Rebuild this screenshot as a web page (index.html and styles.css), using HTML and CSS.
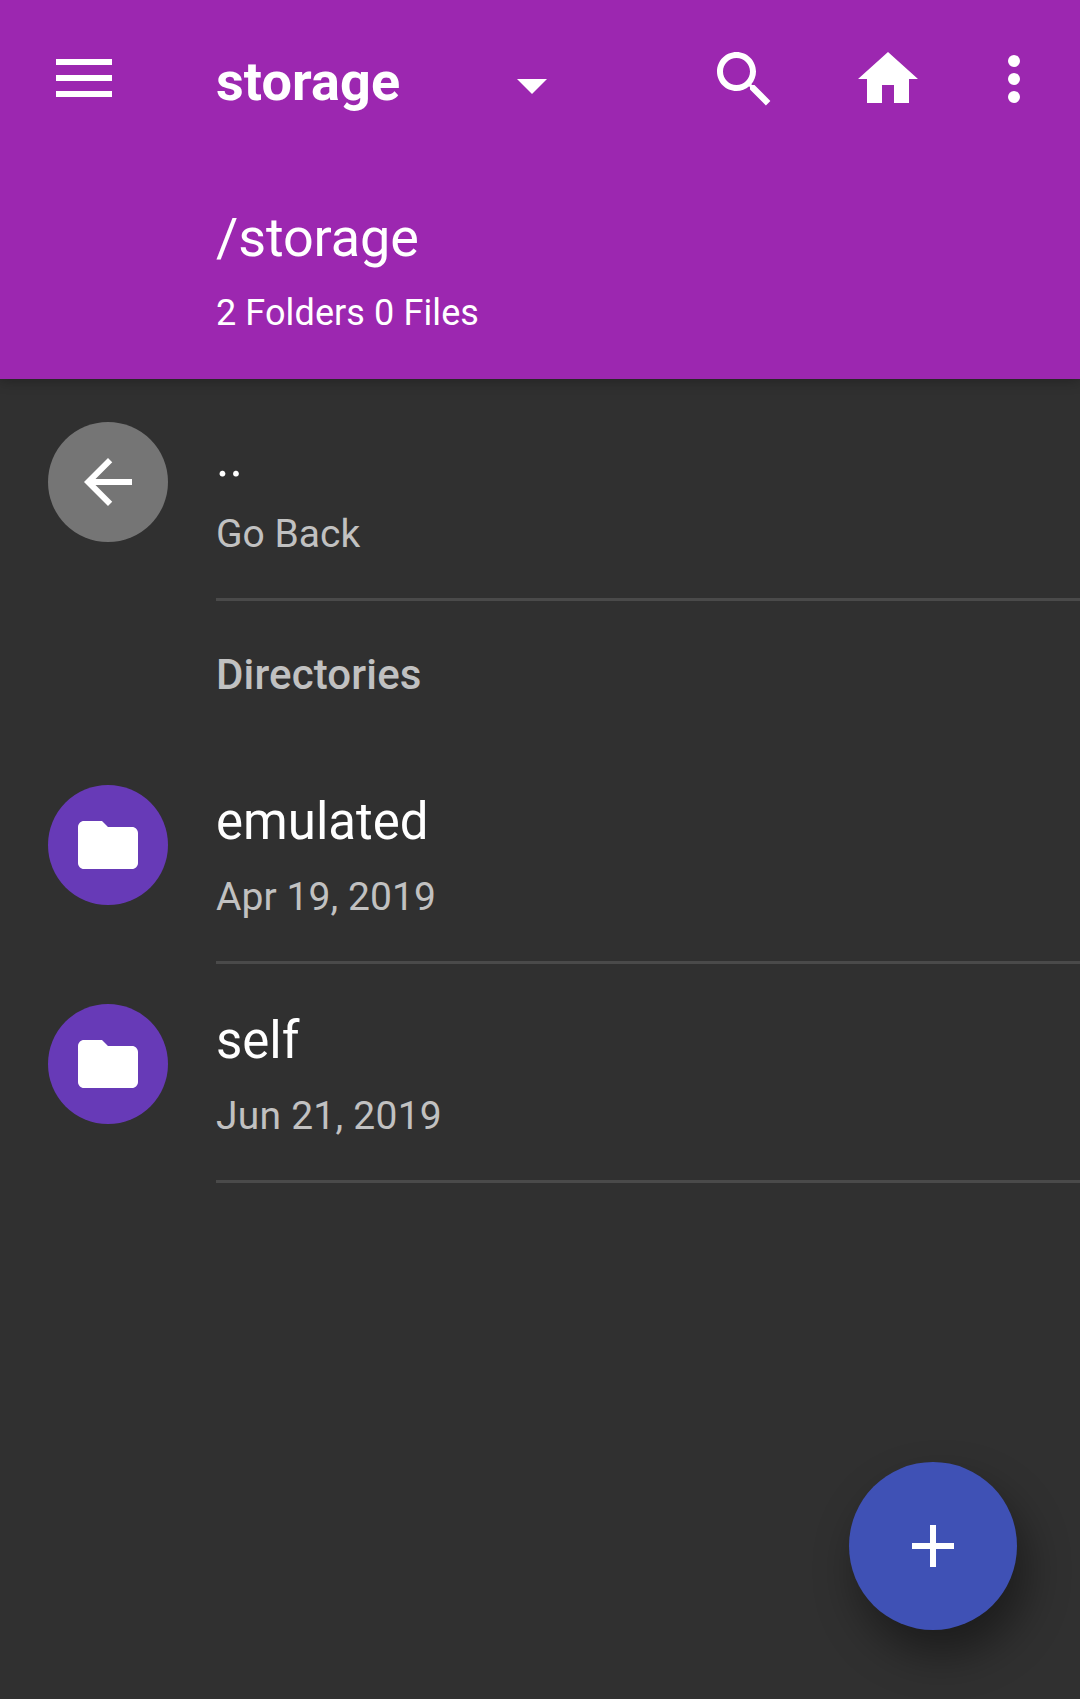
FILE: index.html
```html
<!DOCTYPE html>
<html lang="en">
<head>
<meta charset="utf-8">
<title>storage</title>
<link rel="stylesheet" href="styles.css">
</head>
<body>
<header class="header">
  <div class="toolbar">
    <svg class="menu" viewBox="0 0 56 38"><path d="M0 0h56v6H0zM0 16h56v6H0zM0 32h56v6H0z"/></svg>
    <div class="spinner">
      <h1 class="title">storage</h1>
      <svg class="caret" viewBox="0 0 30 15"><path d="M0 0h30L15 15z"/></svg>
    </div>
    <svg class="action" viewBox="0 0 24 24"><path d="M15.5 14h-.79l-.28-.27C15.41 12.59 16 11.11 16 9.5 16 5.91 13.09 3 9.5 3S3 5.91 3 9.5 5.91 16 9.5 16c1.61 0 3.09-.59 4.23-1.57l.27.28v.79l5.3 5.3L20.79 19.3l-5.29-5.3zm-6 0C7.01 14 5 11.99 5 9.5S7.01 5 9.5 5 14 7.01 14 9.5 11.99 14 9.5 14z"/></svg>
    <svg class="action action-home" viewBox="0 0 24 24"><path d="M10 20v-6h4v6h5v-8h3L12 3 2 12h3v8z"/></svg>
    <svg class="action action-more" viewBox="0 0 24 24"><circle cx="12" cy="6" r="2"/><circle cx="12" cy="12" r="2"/><circle cx="12" cy="18" r="2"/></svg>
  </div>
  <div class="location">
    <p class="path">/storage</p>
    <p class="summary">2 Folders 0 Files</p>
  </div>
</header>
<main class="list">
  <div class="row">
    <span class="badge badge-back"><svg class="glyph" viewBox="0 0 24 24"><path d="M20 11H7.83l5.59-5.59L12 4l-8 8 8 8 1.41-1.41L7.83 13H20z"/></svg></span>
    <div class="entry">
      <p class="name">..</p>
      <p class="detail">Go Back</p>
    </div>
  </div>
  <h2 class="section">Directories</h2>
  <div class="row">
    <span class="badge"><svg class="glyph" viewBox="0 0 24 24"><path d="M10 4H4c-1.1 0-1.99.9-1.99 2L2 18c0 1.1.9 2 2 2h16c1.1 0 2-.9 2-2V8c0-1.1-.9-2-2-2h-8z"/></svg></span>
    <div class="entry">
      <p class="name">emulated</p>
      <p class="detail detail-apr">Apr 19, 2019</p>
    </div>
  </div>
  <div class="row">
    <span class="badge"><svg class="glyph" viewBox="0 0 24 24"><path d="M10 4H4c-1.1 0-1.99.9-1.99 2L2 18c0 1.1.9 2 2 2h16c1.1 0 2-.9 2-2V8c0-1.1-.9-2-2-2h-8z"/></svg></span>
    <div class="entry">
      <p class="name">self</p>
      <p class="detail detail-jun">Jun 21, 2019</p>
    </div>
  </div>
</main>
<div class="fab"><svg class="glyph" viewBox="0 0 24 24"><path d="M19 13h-6v6h-2v-6H5v-2h6V5h2v6h6z"/></svg></div>
</body>
</html>
```
FILE: styles.css
```css
* { box-sizing: border-box; margin: 0; padding: 0; }

body {
  height: 1699px;
  overflow: hidden;
  background: #303030;
  color: #fff;
  font-family: Roboto, sans-serif;
}

svg { display: block; flex: none; fill: #fff; }

.header {
  position: relative;
  height: 379px;
  background: #9c27b0;
  box-shadow: 0 2px 12px rgba(0, 0, 0, .28);
}

.toolbar {
  display: flex;
  align-items: center;
  height: 158px;
  padding: 0 30px 0 56px;
}

.menu { width: 56px; height: 38px; margin-bottom: 2px; }

.spinner {
  display: flex;
  align-items: center;
  justify-content: space-between;
  width: 331px;
  margin: 0 161px 0 104px;
}

.title { margin-top: 5px; font-size: 54px; line-height: 64px; font-weight: 700; letter-spacing: .08px; }
.caret { width: 30px; height: 15px; margin-top: 15px; }

.action { width: 72px; height: 72px; }
.action-home { margin-left: 72px; }
.action-more { margin-left: 54px; }

.location { padding: 44px 0 0 216px; }
.path { font-size: 54px; line-height: 71px; letter-spacing: -.12px; }
.summary { margin-top: 16px; font-size: 36px; line-height: 48px; letter-spacing: .1px; }

.list { padding-top: 3px; }

.row { display: flex; height: 219px; padding-left: 48px; gap: 48px; }

.badge {
  display: flex;
  align-items: center;
  justify-content: center;
  flex: none;
  width: 120px;
  height: 120px;
  margin-top: 40px;
  border-radius: 50%;
  background: #673ab7;
}
.badge-back { background: #757575; }

.glyph { width: 72px; height: 72px; }

.entry { flex: 1; padding-top: 47px; border-bottom: 3px solid #4a4a4a; }
.name { font-size: 51px; line-height: 60px; }
.detail { margin-top: 22px; font-size: 39px; line-height: 46px; color: #c1c1c1; }
.detail-apr { letter-spacing: .08px; }
.detail-jun { letter-spacing: .24px; }

.section {
  height: 144px;
  padding: 3px 0 0 216px;
  font-size: 42px;
  line-height: 141px;
  font-weight: 500;
  letter-spacing: .14px;
  color: #c1c1c1;
}

.fab {
  position: absolute;
  right: 63px;
  top: 1462px;
  display: flex;
  align-items: center;
  justify-content: center;
  width: 168px;
  height: 168px;
  border-radius: 50%;
  background: #3f51b5;
  box-shadow: 9px 24px 44px rgba(0, 0, 0, .42);
}
```
